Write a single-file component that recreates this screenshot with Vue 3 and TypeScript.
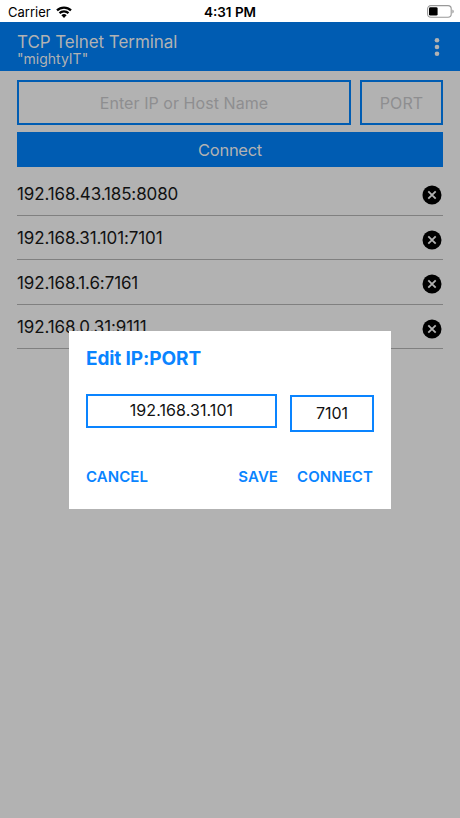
<script setup lang="ts">
import { ref } from 'vue'

interface Host {
  ip: string
  port: string
}

const hosts = ref<Host[]>([
  { ip: '192.168.43.185', port: '8080' },
  { ip: '192.168.31.101', port: '7101' },
  { ip: '192.168.1.6', port: '7161' },
  { ip: '192.168.0.31', port: '9111' },
])

const host = ref('')
const port = ref('')
const editHost = ref('192.168.31.101')
const editPort = ref('7101')

function remove(index: number): void {
  hosts.value.splice(index, 1)
}
</script>

<template>
  <div class="screen">
    <div class="status">
      <div class="carrier">
        <span>Carrier</span>
        <svg class="wifi" viewBox="0 0 16 12" width="16" height="12">
          <path d="M1 4.4a10 10 0 0 1 14 0" />
          <path d="M3.5 7.1a6.5 6.5 0 0 1 9 0" />
          <path class="solid" d="M8 11.9 5.4 9.3a3.8 3.8 0 0 1 5.2 0z" />
        </svg>
      </div>
      <span class="time">4:31 PM</span>
      <svg class="battery" viewBox="0 0 28 13" width="28" height="13">
        <rect class="shell" x=".6" y=".6" width="23.6" height="11.6" rx="3.2" />
        <rect x="2" y="2.2" width="8.6" height="8.4" rx="1.4" />
        <path class="tip" d="M25.4 4.4c1.8.6 1.8 3.4 0 4z" />
      </svg>
    </div>

    <header class="bar">
      <div class="titles">
        <div class="title">TCP Telnet Terminal</div>
        <div class="subtitle">"mightyIT"</div>
      </div>
      <svg class="dots" viewBox="0 0 6 20" width="6" height="20">
        <circle cx="3" cy="3.3" r="2.3" />
        <circle cx="3" cy="10" r="2.3" />
        <circle cx="3" cy="16.7" r="2.3" />
      </svg>
    </header>

    <main class="content">
      <div class="fields">
        <input v-model="host" class="field host" placeholder="Enter IP or Host Name" />
        <input v-model="port" class="field port" placeholder="PORT" />
      </div>
      <button class="connect">Connect</button>
      <ul class="list">
        <li v-for="(h, i) in hosts" :key="h.ip" class="row">
          <span class="address">{{ h.ip }}:{{ h.port }}</span>
          <svg class="remove" viewBox="0 0 20 20" width="20" height="20" @click="remove(i)">
            <circle cx="10" cy="10" r="9.5" />
            <path d="m6.3 6.3 7.4 7.4m0-7.4-7.4 7.4" />
          </svg>
        </li>
      </ul>
    </main>

    <section class="dialog">
      <h2 class="heading">Edit IP:PORT</h2>
      <div class="edit">
        <input v-model="editHost" class="edit-host" />
        <input v-model="editPort" class="edit-port" />
      </div>
      <div class="actions">
        <button class="action cancel">CANCEL</button>
        <button class="action save">SAVE</button>
        <button class="action open">CONNECT</button>
      </div>
    </section>
  </div>
</template>

<style>
body {
  background: #b2b2b2;
}
</style>

<style scoped>
.screen,
.screen * {
  box-sizing: border-box;
}
.screen {
  position: relative;
  width: 460px;
  height: 818px;
  overflow: hidden;
  background: #b2b2b2;
  color: #111;
  font-family: Inter, "Liberation Sans", sans-serif;
}
input,
button {
  margin: 0;
  padding: 0;
  border-radius: 0;
  font-family: inherit;
  text-align: center;
  outline: none;
}
.status {
  display: grid;
  grid-template-columns: 1fr auto 1fr;
  align-items: center;
  height: 22px;
  padding: 2px 5px 0 8px;
  background: #fff;
  color: #000;
  font-size: 13px;
  line-height: 20px;
}
.carrier {
  display: flex;
  align-items: center;
  gap: 5px;
}
.wifi {
  margin-top: -1px;
  fill: none;
  stroke: #000;
  stroke-width: 2.2;
}
.wifi .solid {
  fill: #000;
  stroke: none;
}
.time {
  margin-right: 3px;
  font-size: 13.5px;
  font-weight: 600;
}
.battery {
  justify-self: end;
  margin-top: -1px;
}
.shell {
  fill: none;
  stroke: #999;
  stroke-width: 1.1;
}
.tip {
  fill: #999;
}
.bar {
  display: flex;
  justify-content: space-between;
  height: 49px;
  padding: 10px 20px 0 17px;
  background: #005cb2;
  color: #b2b2b2;
}
.title {
  font-size: 17px;
  letter-spacing: -0.06px;
  line-height: 20px;
}
.subtitle {
  font-size: 14px;
  line-height: 14px;
}
.dots {
  margin-top: 5px;
  fill: #b2b2b2;
}
.content {
  padding: 9px 17px 0;
}
.fields {
  display: flex;
  gap: 9px;
}
.field {
  height: 45px;
  border: 2px solid #005cb2;
  background: transparent;
  font-size: 16px;
  letter-spacing: 0.06px;
}
.field::placeholder {
  color: #8e8e90;
  opacity: 1;
}
.host {
  width: 334px;
}
.port {
  width: 83px;
}
.connect {
  display: block;
  width: 100%;
  height: 35px;
  margin-top: 7px;
  border: 0;
  background: #005cb2;
  color: #b2b2b2;
  font-size: 16.5px;
  letter-spacing: -0.3px;
}
.list {
  margin: 4.6px 0 0;
  padding: 0;
  list-style: none;
}
.row {
  display: flex;
  justify-content: space-between;
  height: 44.4px;
  padding: 11.5px 1px 0 0;
  border-bottom: 1px solid #808080;
}
.address {
  font-size: 17px;
  letter-spacing: -0.12px;
  line-height: 22px;
}
.remove {
  margin-top: 2.4px;
}
.remove circle {
  fill: #000;
}
.remove path {
  fill: none;
  stroke: #b2b2b2;
  stroke-width: 1.8;
}
.dialog {
  position: absolute;
  left: 69px;
  top: 331px;
  width: 322px;
  height: 178px;
  padding: 16px 17px 0;
  background: #fff;
}
.heading {
  margin: 0;
  color: #0a84ff;
  font-size: 19px;
  font-weight: 700;
  letter-spacing: -0.1px;
  line-height: 24px;
}
.edit {
  display: flex;
  justify-content: space-between;
  align-items: flex-start;
  height: 38px;
  margin-top: 23px;
}
.edit input {
  border: 2px solid #0a84ff;
  background: transparent;
  color: #111;
  font-size: 16px;
  letter-spacing: 0.08px;
}
.edit .edit-host {
  width: 191px;
  height: 34px;
  padding-bottom: 2px;
}
.edit .edit-port {
  width: 84px;
  height: 37px;
  margin-top: 1px;
  padding-bottom: 1px;
  letter-spacing: -0.1px;
}
.actions {
  display: flex;
  margin-top: 35px;
  padding-right: 1px;
}
.action {
  border: 0;
  background: none;
  color: #0a84ff;
  font-size: 15px;
  font-weight: 600;
  letter-spacing: 0.08px;
  line-height: 20px;
}
.save {
  margin-left: auto;
}
.open {
  margin-left: 19px;
}
</style>
